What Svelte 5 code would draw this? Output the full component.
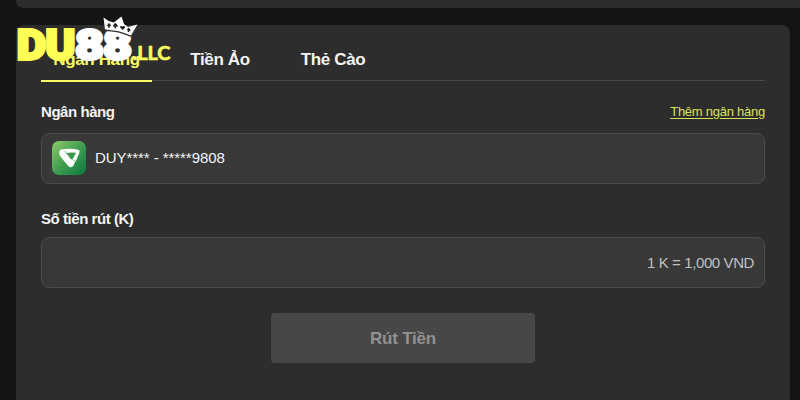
<script lang="ts">
  let tabs = ["Ngân Hàng", "Tiền Ảo", "Thẻ Cào"];
  let active = $state(0);
</script>

<div class="page">
  <div class="strip"></div>

  <main class="panel">
    <nav class="tabs">
      {#each tabs as tab, i}
        <button class="tab" class:active={active === i} onclick={() => (active = i)}>
          <span>{tab}</span>
        </button>
      {/each}
    </nav>

    <div class="row">
      <span class="label bank-label">Ngân hàng</span>
      <a class="add" href="#add">Thêm ngân hàng</a>
    </div>
    <div class="field">
      <svg class="bank-icon" width="34" height="34" viewBox="0 0 34 34">
        <defs>
          <linearGradient id="bank" x1="0" y1="0" x2="1" y2="1">
            <stop offset="0" stop-color="#8fca6c" />
            <stop offset="0.5" stop-color="#429e50" />
            <stop offset="1" stop-color="#08783f" />
          </linearGradient>
        </defs>
        <rect width="34" height="34" rx="7" fill="url(#bank)" />
        <path
          d="M9 8.5 Q17.5 7 25.5 8.5 Q28.5 9.2 27.3 12 Q25 18.5 21.2 24.8 Q19 27.8 16.2 25 L8 15 Q6 10 9 8.5 Z"
          fill="#fff"
        />
        <path d="M14.3 12 Q19 11 24.2 11.8 L21 17.6 Q19.8 19.2 18.4 17.8 Z" fill="#3c994d" />
        <path d="M12.8 9.8 L14.8 12.8 M20.5 18.5 L22.8 20" stroke="#3c994d" stroke-width="0.7" />
      </svg>
      <span class="account">DUY**** - *****9808</span>
    </div>

    <div class="row amount-row">
      <span class="label amount-label">Số tiền rút (K)</span>
    </div>
    <div class="field amount">
      <span class="rate">1 K = 1,000 VND</span>
    </div>

    <button class="submit" disabled>Rút Tiền</button>
  </main>

  <!-- Logo -->
  <svg class="logo" width="160" height="54" viewBox="0 0 160 54">
    <g class="brand">
      <text x="2" y="42.7" textLength="58" lengthAdjust="spacingAndGlyphs" class="yellow">DU</text>
      <text x="60.5" y="42.7" textLength="56" lengthAdjust="spacingAndGlyphs" class="white">88</text>
    </g>
    <!-- Crown -->
    <path
      d="M88.5 1.5 L93.5 5 L98.8 6.5 L106.5 0.5 L109 8 L113 11 L122.5 8.5 L116 19.5 Q104 13.5 90 13.5 Z"
      fill="#fff"
    />
    <path d="M89.5 14.3 Q104 14.3 116.2 20.4" fill="none" stroke="#303030" stroke-width="1.2" />
    <g fill="#202020">
      <path d="M94 6.8 L96.3 10 L94.6 10.3 L95 11.7 H93 L93.4 10.3 L91.8 10 Z" />
      <path d="M100.3 6.8 L102 8.6 L103 10.6 L100.9 10.8 L101.3 12.2 H99.3 L99.7 10.8 L97.8 10.4 L98.7 8.6 Z" />
      <path d="M107.6 14 L105 11.2 Q105.3 9 107.6 10.6 Q109.8 9.2 110.1 11.4 Z" />
      <path d="M114 11.6 L115.7 14.8 L114.2 15 L114.2 16.3 L112.4 15.8 L113 14.6 L111.7 13.7 Z" />
    </g>
    <text x="117.5" y="43.5" textLength="38" lengthAdjust="spacingAndGlyphs" class="suffix">.LLC</text>
  </svg>
</div>

<style>
  :global(body) {
    margin: 0;
    background: #141414;
  }

  .page {
    position: relative;
    width: 800px;
    height: 400px;
    overflow: hidden;
    box-sizing: border-box;
    padding-left: 16px;
    background: #141414;
    color: #f4f4f4;
    font-family: "Liberation Sans", Arial, sans-serif;
  }

  .strip {
    height: 8px;
    margin-bottom: 17px;
    background: #2d2d2d;
    border-radius: 0 0 0 7px;
  }

  .panel {
    box-sizing: border-box;
    width: 774px;
    height: 390px;
    padding: 13px 25px 0;
    background: #2d2d2d;
    border-radius: 8px;
  }

  .tabs {
    display: flex;
    height: 42px;
    border-bottom: 1px solid #484848;
  }

  .tab {
    box-sizing: content-box;
    height: 42px;
    padding: 0;
    border: 0;
    border-bottom: 2px solid transparent;
    background: none;
    color: #f4f4f4;
    font: bold 17px/44px "Liberation Sans", Arial, sans-serif;
    letter-spacing: -0.35px;
    white-space: nowrap;
    text-align: center;
  }

  .tab:nth-child(1) {
    width: 111px;
  }

  .tab:nth-child(2) {
    width: 136px;
  }

  .tab:nth-child(3) {
    width: 90px;
  }

  .tab.active {
    color: #fafa64;
    border-bottom-color: #fafa64;
  }

  .row {
    display: flex;
    justify-content: space-between;
    align-items: center;
    height: 20px;
    margin: 20px 0 12px;
  }

  .amount-row {
    margin: 24px 0 9px;
  }

  .label {
    font-size: 15px;
    font-weight: bold;
    letter-spacing: -0.45px;
  }

  .add {
    color: #dce359;
    font-size: 13px;
    letter-spacing: -0.25px;
    text-underline-offset: 2px;
  }

  .field {
    display: flex;
    align-items: center;
    box-sizing: border-box;
    height: 51px;
    padding: 0 10px;
    background: #383838;
    border: 1px solid #4a4a4a;
    border-radius: 8px;
  }

  .bank-icon {
    margin-top: -1px;
  }

  .account {
    margin: -2px 0 0 9px;
    font-size: 15px;
    letter-spacing: -0.06px;
  }

  .amount {
    justify-content: flex-end;
  }

  .rate {
    color: #c0c0c0;
    font-size: 15px;
    letter-spacing: -0.4px;
  }

  .submit {
    display: block;
    width: 264px;
    height: 50px;
    margin: 25px 0 0 230px;
    padding: 2px 0 0;
    border: 0;
    border-radius: 4px;
    background: #474747;
    color: #929292;
    font: bold 17px "Liberation Sans", Arial, sans-serif;
    letter-spacing: -0.2px;
  }

  .logo {
    position: absolute;
    left: 15px;
    top: 16px;
    overflow: visible;
  }

  .brand text {
    font: 700 40px Roboto, sans-serif;
    stroke-width: 4px;
    stroke-linejoin: miter;
  }

  .yellow {
    fill: #fdff55;
    stroke: #fdff55;
  }

  .white {
    fill: #fff;
    stroke: #fff;
  }

  .suffix {
    fill: #f5fa62;
    stroke: #f5fa62;
    stroke-width: 0.7px;
    font: bold 19px Lato, sans-serif;
  }
</style>
